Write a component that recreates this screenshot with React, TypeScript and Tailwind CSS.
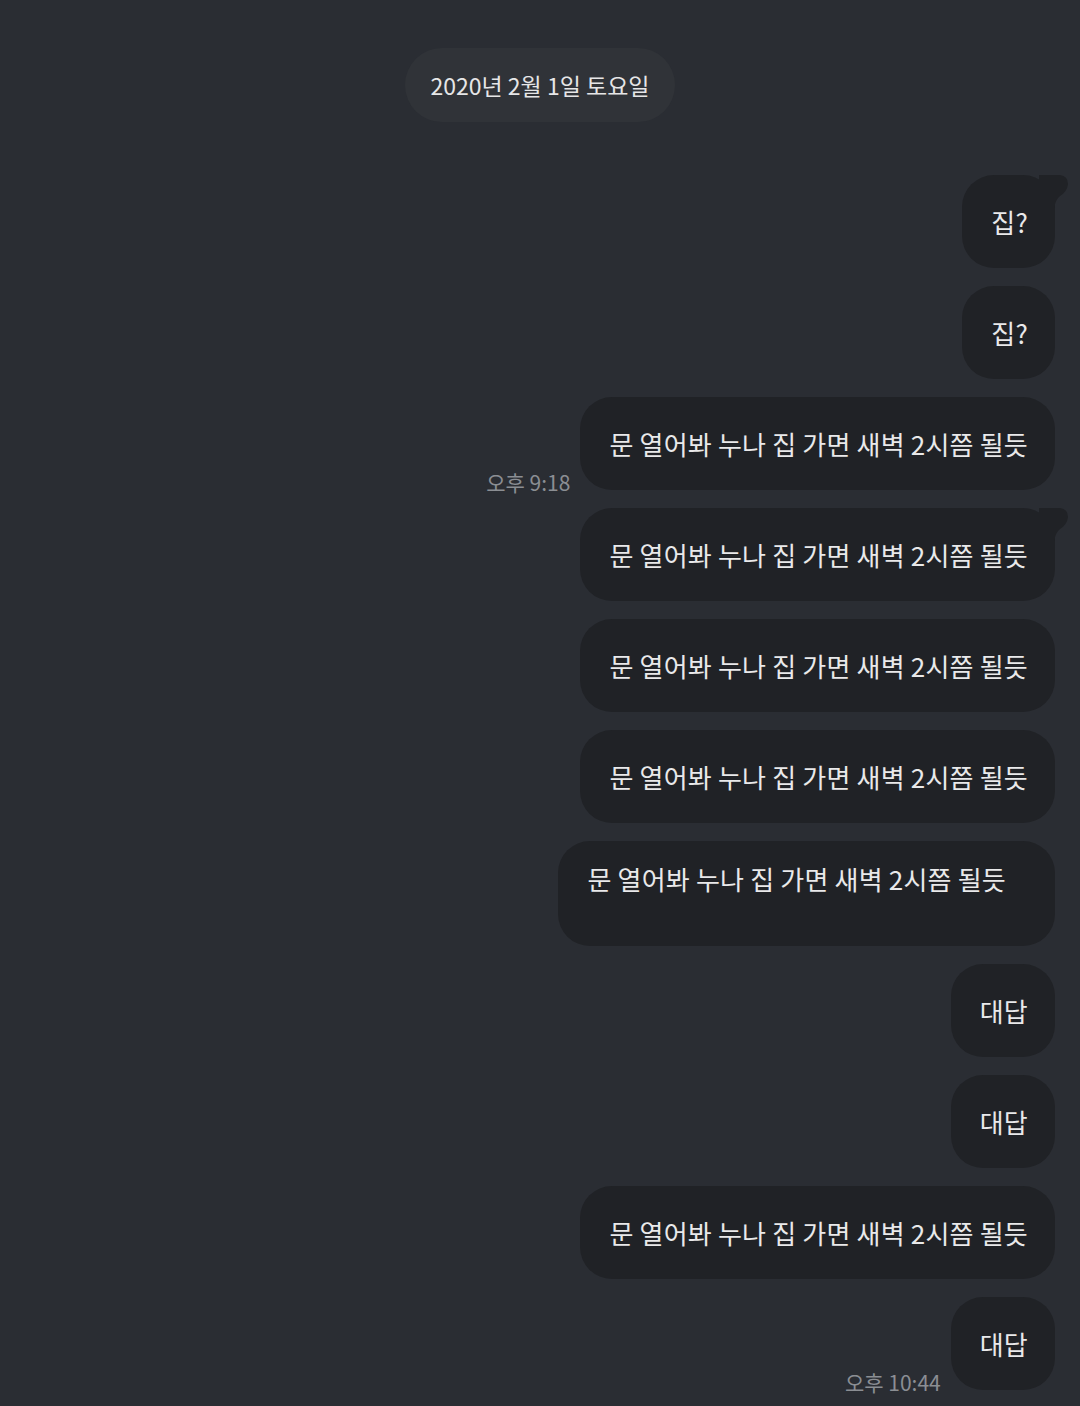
import React from "react";

const FONT = { fontFamily: '"Noto Sans CJK KR", "Noto Sans", sans-serif' };
const LONG = "문 열어봐 누나 집 가면 새벽 2시쯤 될듯";

function Tail() {
  return (
    <svg className="absolute right-[-14px] top-0" width="30" height="34" viewBox="0 0 30 34">
      <path d="M0 0 L21 0 Q29 1 29 9 Q28 17 21 21 Q16 25 15 34 L0 34 Z" fill="#202226" />
    </svg>
  );
}

function Bubble({ text, tail, time }: { text: string; tail?: boolean; time?: string }) {
  return (
    <div className="flex items-end justify-end gap-[10px]">
      {time && (
        <span className="mb-[-3px] text-[21px] leading-none text-[#8b8e93]">{time}</span>
      )}
      <div className="relative flex h-[93px] items-center rounded-[32px] bg-[#202226] pl-[29px] pr-[27px] text-[26px] text-[#e9e9ea] tracking-[0.2px]">
        {tail && <Tail />}
        <span className="relative">{text}</span>
      </div>
    </div>
  );
}

export default function App() {
  return (
    <div className="min-h-[1406px] w-[1080px] bg-[#2a2d33] overflow-hidden" style={FONT}>
      <div className="flex justify-center pt-[48px]">
        <div className="flex h-[74px] w-[270px] items-center justify-center rounded-full bg-[#303338] text-[23px] text-[#e6e6e7]">
          2020년 2월 1일 토요일
        </div>
      </div>
      <div className="mt-[53px] flex flex-col gap-[18px] pr-[25px]">
        <Bubble text="집?" tail />
        <Bubble text="집?" />
        <Bubble text={LONG} time="오후 9:18" />
        <Bubble text={LONG} tail />
        <Bubble text={LONG} />
        <Bubble text={LONG} />
        <div className="flex justify-end">
          <div className="h-[105px] rounded-[32px] bg-[#202226] pl-[29px] pr-[49px] pt-[18px] text-[26px] text-[#e9e9ea] tracking-[0.2px]">
            {LONG}
          </div>
        </div>
        <Bubble text="대답" />
        <Bubble text="대답" />
        <Bubble text={LONG} />
        <Bubble text="대답" time="오후 10:44" />
      </div>
    </div>
  );
}
